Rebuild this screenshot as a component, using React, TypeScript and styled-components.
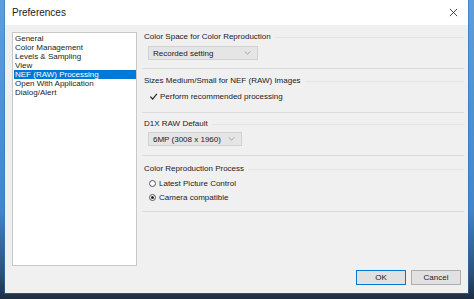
import styled, { createGlobalStyle } from "styled-components";

const GlobalStyle = createGlobalStyle`
  html, body {
    margin: 0;
    padding: 0;
    width: 474px;
    height: 299px;
    overflow: hidden;
  }
  body {
    background: linear-gradient(180deg, #5b9fe0 0%, #3f86cf 70%, #2c4f78 92%, #1f2d40 100%);
    font-family: "Liberation Sans", Arial, sans-serif;
    color: #1a1a1a;
  }
`;

const categories = [
  "General",
  "Color Management",
  "Levels & Sampling",
  "View",
  "NEF (RAW) Processing",
  "Open With Application",
  "Dialog/Alert",
];

const App = () => {
  return (
    <>
      <GlobalStyle />
      <Window>
        <TitleBar>
          <Title>Preferences</Title>
          <CloseIcon viewBox="0 0 10 10">
            <path d="M1 1 L9 9 M9 1 L1 9" stroke="#333" strokeWidth="1" />
          </CloseIcon>
        </TitleBar>
        <Body>
          <List>
            {categories.map((c) => (
              <ListItem key={c} $selected={c === "NEF (RAW) Processing"}>
                {c}
              </ListItem>
            ))}
          </List>
          <Panel>
            <Section $top={0} $bottom={8}>
              <Heading>Color Space for Color Reproduction</Heading>
              <Select $width={110}>
                Recorded setting
                <Chevron />
              </Select>
            </Section>
            <Section $top={7} $bottom={11} $gap={5}>
              <Heading>Sizes Medium/Small for NEF (RAW) Images</Heading>
              <Option>
                <CheckBox viewBox="0 0 10 10">
                  <path d="M1.5 5.2 L4 7.8 L8.8 2" fill="none" stroke="#222" strokeWidth="1.3" />
                </CheckBox>
                Perform recommended processing
              </Option>
            </Section>
            <Section $top={6} $bottom={9} $gap={3}>
              <Heading>D1X RAW Default</Heading>
              <Select $width={94}>
                6MP (3008 x 1960)
                <Chevron />
              </Select>
            </Section>
            <Section $top={8} $bottom={9}>
              <Heading>Color Reproduction Process</Heading>
              <Options>
                <Option>
                  <Radio $checked={false} />
                  Latest Picture Control
                </Option>
                <Option>
                  <Radio $checked />
                  Camera compatible
                </Option>
              </Options>
            </Section>
          </Panel>
          <Buttons>
            <Button $default>OK</Button>
            <Button>Cancel</Button>
          </Buttons>
        </Body>
      </Window>
    </>
  );
};

const Chevron = () => (
  <ChevronIcon viewBox="0 0 8 5">
    <path d="M0.5 0.5 L4 4 L7.5 0.5" fill="none" stroke="#8a8a8a" strokeWidth="0.9" />
  </ChevronIcon>
);

const Window = styled.div`
  margin: 0 6px 0 5px;
  height: 293px;
  display: flex;
  flex-direction: column;
  background: #f0f0f0;
  box-shadow: 0 0 0 1px rgba(60, 110, 170, 0.5);
`;

const TitleBar = styled.div`
  height: 25px;
  background: #ffffff;
  display: flex;
  align-items: center;
  justify-content: space-between;
  padding: 0 10px 1px 7px;
  box-sizing: border-box;
`;

const Title = styled.div`
  font-size: 10px;
  color: #222;
`;

const CloseIcon = styled.svg`
  width: 9px;
  height: 9px;
`;

const Body = styled.div`
  flex: 1;
  display: grid;
  grid-template-columns: 125px 1fr;
  grid-template-rows: 234px auto;
  column-gap: 5px;
  row-gap: 4px;
  padding: 7px 2px 0 7px;
`;

const List = styled.div`
  background: #ffffff;
  border: 1px solid #c8c8c8;
  box-sizing: border-box;
  padding: 1px 0 0 1px;
  font-size: 8px;
  line-height: 9px;
`;

const ListItem = styled.div<{ $selected?: boolean }>`
  padding-left: 1px;
  background: ${(p) => (p.$selected ? "#0078d7" : "transparent")};
  color: ${(p) => (p.$selected ? "#ffffff" : "#1a1a1a")};
`;

const Panel = styled.div`
  display: flex;
  flex-direction: column;
  padding-right: 2px;
`;

const Section = styled.div<{ $top: number; $bottom: number; $gap?: number }>`
  display: flex;
  flex-direction: column;
  align-items: flex-start;
  gap: ${(p) => p.$gap ?? 4}px;
  padding: ${(p) => p.$top}px 0 ${(p) => p.$bottom}px 2px;
  border-bottom: 1px solid #dcdcdc;
`;

const Heading = styled.div`
  align-self: stretch;
  display: flex;
  align-items: center;
  gap: 4px;
  font-size: 8px;
  line-height: 10px;
  color: #1a1a1a;

  &::after {
    content: "";
    flex: 1;
    height: 1px;
    background: #e4e4e4;
  }
`;

const Select = styled.div<{ $width: number }>`
  width: ${(p) => p.$width}px;
  height: 14px;
  box-sizing: border-box;
  margin-left: 4px;
  padding: 0 6px 0 4px;
  display: flex;
  align-items: center;
  justify-content: space-between;
  background: #e5e5e5;
  border: 1px solid #d2d2d2;
  font-size: 8px;
  color: #1a1a1a;
`;

const ChevronIcon = styled.svg`
  width: 7px;
  height: 4px;
`;

const Options = styled.div`
  display: flex;
  flex-direction: column;
  gap: 4px;
`;

const Option = styled.div`
  display: flex;
  align-items: center;
  gap: 2px;
  margin-left: 5px;
  height: 10px;
  font-size: 8px;
  color: #1a1a1a;
`;

const CheckBox = styled.svg`
  width: 9px;
  height: 9px;
`;

const Radio = styled.span<{ $checked?: boolean }>`
  width: 7px;
  height: 7px;
  box-sizing: border-box;
  border-radius: 50%;
  border: 1px solid #555;
  background: #fff;
  display: flex;
  align-items: center;
  justify-content: center;
  margin-right: 1px;

  &::after {
    content: "";
    width: 3px;
    height: 3px;
    border-radius: 50%;
    background: ${(p) => (p.$checked ? "#222" : "transparent")};
  }
`;

const Buttons = styled.div`
  grid-column: 2;
  display: flex;
  justify-content: flex-end;
  gap: 5px;
  padding-right: 5px;
`;

const Button = styled.div<{ $default?: boolean }>`
  width: 50px;
  height: 15px;
  box-sizing: border-box;
  display: flex;
  align-items: center;
  justify-content: center;
  font-size: 8px;
  color: #1a1a1a;
  background: #e1e1e1;
  border: 1px solid ${(p) => (p.$default ? "#0078d7" : "#adadad")};
`;

export default App;
